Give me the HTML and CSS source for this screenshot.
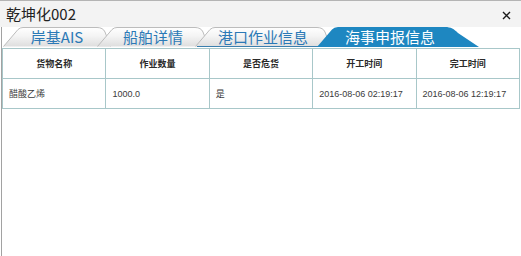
FILE: index.html
```html
<!DOCTYPE html>
<html lang="zh-CN">

<head>
    <meta http-equiv="Content-Type" content="text/html; charset=UTF-8">
    <title>乾坤化002</title>
    <link rel="stylesheet" href="styles.css">
</head>

<body>
    <svg class="defs" width="0" height="0">
        <defs>
            <linearGradient id="tabfill" x1="0" y1="0" x2="0" y2="1">
                <stop offset="0" stop-color="#ffffff" />
                <stop offset="0.45" stop-color="#f4f4f4" />
                <stop offset="1" stop-color="#dedede" />
            </linearGradient>
        </defs>
    </svg>

    <div class="titlebar">
        <span class="title">乾坤化002</span>
        <a class="close" href="#">
            <svg width="9" height="9" viewBox="0 0 9 9">
                <path d="M1 1 L8 8 M8 1 L1 8" stroke="#1a1a1a" stroke-width="1.4" fill="none" />
            </svg>
        </a>
    </div>

    <div class="panel">
        <ul class="tabs">
            <li class="tab tab-ais">
                <svg class="tab-bg" width="108" height="20" viewBox="0 0 108 20">
                    <path d="M0.5 19.5 L15 2.5 Q17 0.5 20 0.5 L94 0.5 Q100 0.5 102 5 L107.5 19.5" />
                </svg>
                <span>岸基AIS</span>
            </li>
            <li class="tab tab-ship">
                <svg class="tab-bg" width="112" height="20" viewBox="0 0 112 20">
                    <path d="M0.5 19.5 L15 2.5 Q17 0.5 20 0.5 L98 0.5 Q104 0.5 106 5 L111.5 19.5" />
                </svg>
                <span>船舶详情</span>
            </li>
            <li class="tab tab-port">
                <svg class="tab-bg" width="136" height="20" viewBox="0 0 136 20">
                    <path d="M0.5 19.5 L15 2.5 Q17 0.5 20 0.5 L122 0.5 Q128 0.5 130 5 L135.5 19.5" />
                    <line class="tab-line" x1="2" y1="19.5" x2="136" y2="19.5" />
                </svg>
                <span>港口作业信息</span>
            </li>
            <li class="tab tab-sea active">
                <svg class="tab-bg" width="162" height="20" viewBox="0 0 162 20">
                    <path d="M0 20 L15 2.5 Q17 0 21 0 L128 0 C134 0 137 2 141 6 L162 20 Z" />
                </svg>
                <span>海事申报信息</span>
            </li>
        </ul>

        <table class="grid">
            <thead>
                <tr>
                    <th>货物名称</th>
                    <th>作业数量</th>
                    <th>是否危货</th>
                    <th>开工时间</th>
                    <th>完工时间</th>
                </tr>
            </thead>
            <tbody>
                <tr>
                    <td>醋酸乙烯</td>
                    <td>1000.0</td>
                    <td>是</td>
                    <td>2016-08-06 02:19:17</td>
                    <td>2016-08-06 12:19:17</td>
                </tr>
            </tbody>
        </table>
    </div>
</body>

</html>
```

FILE: styles.css
```css
html {
    height: 100%;
}

body {
    height: 100%;
    margin: 0;
    padding: 0;
    display: flex;
    flex-direction: column;
    background: #fff;
    font-family: "Noto Sans CJK SC", "Liberation Sans", sans-serif;
    overflow: hidden;
}

.defs {
    position: absolute;
    width: 0;
    height: 0;
}

.titlebar {
    display: flex;
    align-items: center;
    justify-content: space-between;
    height: 26px;
    padding: 0 10px 0 6px;
    border-top: 1px solid #b4b4b4;
    background: #f3f3f3;
}

.title {
    font-size: 15px;
    color: #222;
    line-height: 26px;
}

.close {
    display: flex;
    margin-top: 2px;
}

.panel {
    flex: 1;
    margin-left: 1px;
    border-left: 1px solid #a2a2a2;
}

.tabs {
    display: flex;
    height: 20px;
    margin: 0 0 1px 0;
    padding: 0 0 0 1px;
    list-style: none;
}

.tab {
    position: relative;
    display: flex;
    justify-content: center;
    align-items: center;
    height: 20px;
    margin-left: -14px;
    font-size: 15px;
    color: #2b79b6;
}

.tab:first-child {
    margin-left: 0;
}

.tab span {
    position: relative;
    line-height: 20px;
}

.tab-bg {
    position: absolute;
    top: 0;
    left: 0;
}

.tab-bg path {
    fill: url(#tabfill);
    stroke: #bcbcbc;
    stroke-width: 1;
}

.tab-line {
    stroke: #3b7fae;
    stroke-width: 1;
}

.tab-ais {
    width: 108px;
}

.tab-ship {
    width: 112px;
}

.tab-port {
    width: 136px;
}

.tab-sea {
    width: 162px;
    padding-right: 16px;
    box-sizing: border-box;
}

.tab.active {
    z-index: 2;
    color: #fff;
}

.tab.active .tab-bg path {
    fill: #1e87c1;
    stroke: none;
}

.grid {
    width: 518px;
    border-collapse: collapse;
    table-layout: fixed;
    font-family: "Liberation Sans", "Noto Sans CJK SC", sans-serif;
    font-size: 9px;
    color: #333;
}

.grid th,
.grid td {
    height: 29px;
    padding: 0 6px;
    border: 1px solid #a8c7c9;
}

.grid th {
    font-weight: bold;
    color: #2a2a2a;
    text-align: center;
}

.grid td {
    text-align: left;
    color: #3a3a3a;
}
```
